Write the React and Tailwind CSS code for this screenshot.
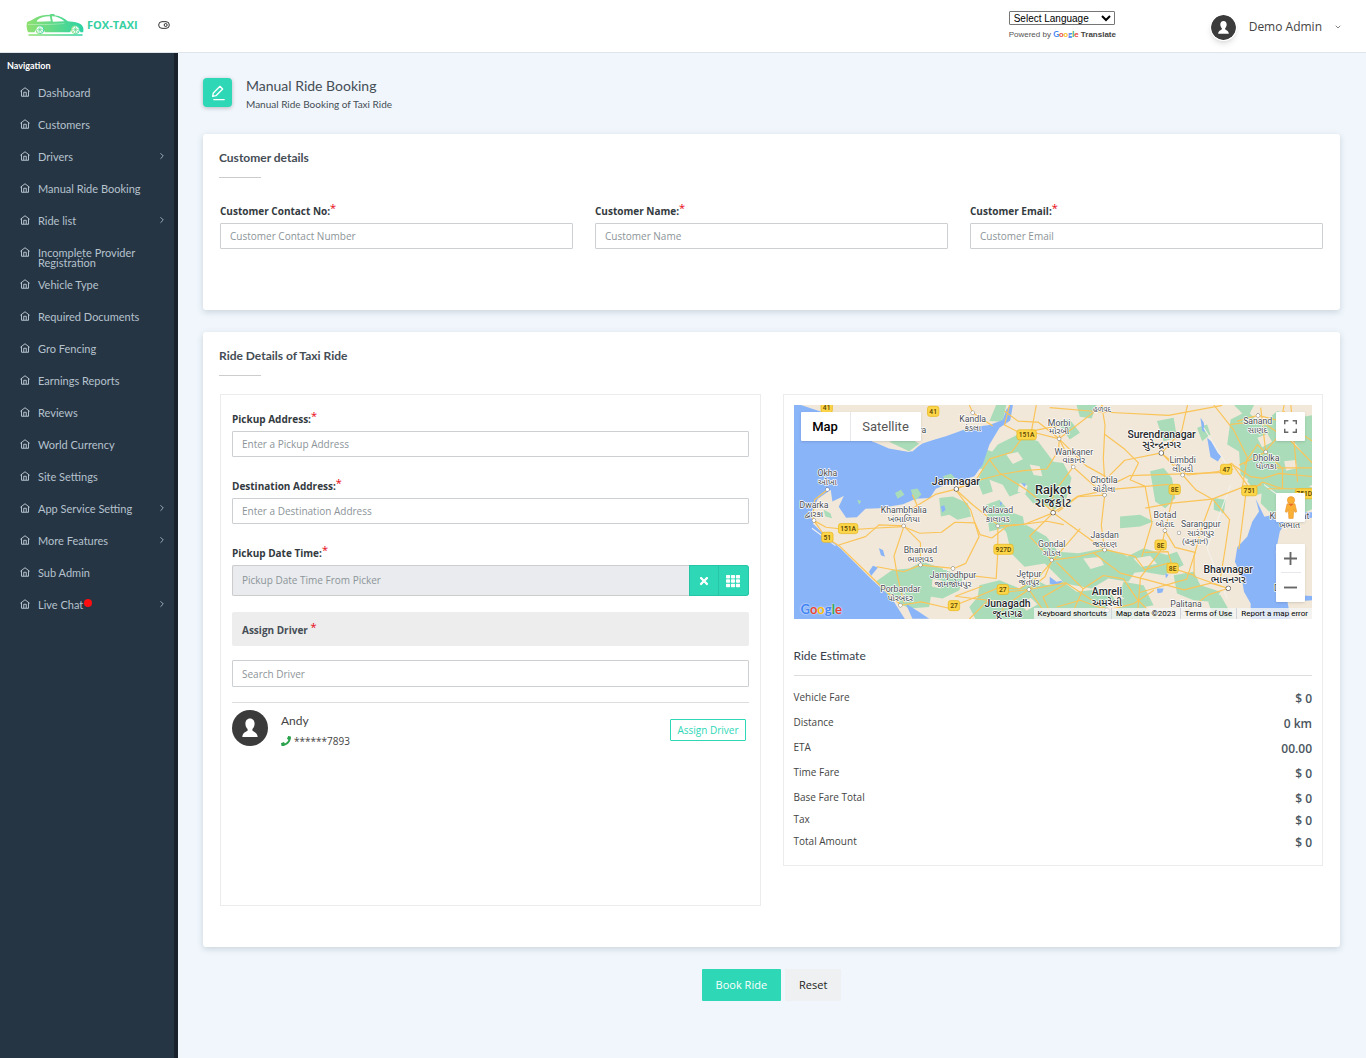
import { FaPhone, FaTimes, FaTh } from 'react-icons/fa';
import { FiChevronDown, FiChevronRight } from 'react-icons/fi';

const navItems = [
  { label: 'Dashboard' },
  { label: 'Customers' },
  { label: 'Drivers', arrow: true },
  { label: 'Manual Ride Booking' },
  { label: 'Ride list', arrow: true },
  { label: 'Incomplete Provider Registration' },
  { label: 'Vehicle Type' },
  { label: 'Required Documents' },
  { label: 'Gro Fencing' },
  { label: 'Earnings Reports' },
  { label: 'Reviews' },
  { label: 'World Currency' },
  { label: 'Site Settings' },
  { label: 'App Service Setting', arrow: true },
  { label: 'More Features', arrow: true },
  { label: 'Sub Admin' },
  { label: 'Live Chat', arrow: true, dot: true },
];

const fareRows = [
  { label: 'Vehicle Fare', value: '$ 0' },
  { label: 'Distance', value: '0 km' },
  { label: 'ETA', value: '00.00' },
  { label: 'Time Fare', value: '$ 0' },
  { label: 'Base Fare Total', value: '$ 0', short: true },
  { label: 'Tax', value: '$ 0', short: true },
  { label: 'Total Amount', value: '$ 0', short: true },
];

// x / y is the centre of the english name, dot is the town marker
const places = [
  { name: 'Kandla', local: 'કંડલા', x: 550, y: 63, dot: [550, 35] },
  { name: 'Okha', local: 'ઓખા', x: 116, y: 225, dot: [116, 264] },
  { name: 'Dwarka', local: 'દ્વારકા', x: 76, y: 319, dot: [76, 357] },
  { name: 'Khambhalia', local: 'ખંભાળિયા', x: 344, y: 334, dot: [344, 373] },
  { name: 'Kalavad', local: 'કાલાવડ', x: 625, y: 336, dot: [625, 373] },
  { name: 'Bhanvad', local: 'ભાણવડ', x: 394, y: 454, dot: [394, 490] },
  { name: 'Jamjodhpur', local: 'જામજોધપુર', x: 491, y: 529, dot: [491, 500] },
  { name: 'Porbandar', local: 'પોરબંદર', x: 334, y: 571, dot: [334, 610] },
  { name: 'Jetpur', local: 'જેતપુર', x: 718, y: 525, dot: [718, 563] },
  { name: 'Gondal', local: 'ગોંડલ', x: 786, y: 437, dot: [786, 475] },
  { name: 'Morbi', local: 'મોરબી', x: 808, y: 74, dot: [808, 113] },
  { name: 'Wankaner', local: 'વાંકાનેર', x: 852, y: 160, dot: [850, 197] },
  { name: 'Chotila', local: 'ચોટીલા', x: 942, y: 245, dot: [944, 281] },
  { name: 'Limbdi', local: 'લીંબડી', x: 1177, y: 185, dot: [1177, 221] },
  { name: 'Botad', local: 'બોટાદ', x: 1124, y: 349, dot: [1124, 387] },
  { name: 'Sarangpur', local: 'સારંગપુર', x: 1231, y: 377, dot: [1166, 394] },
  { name: 'Jasdan', local: 'જસદણ', x: 944, y: 409, dot: [944, 445] },
  { name: 'Palitana', local: '', x: 1187, y: 615, dot: [1180, 634] },
  { name: 'Sanand', local: 'સાણંદ', x: 1401, y: 69, dot: [1402, 43] },
  { name: 'Dholka', local: 'ધોળકા', x: 1426, y: 178, dot: [1425, 152] },
  { name: 'Khambhat', local: 'ખંભાત', x: 1496, y: 353, dot: [1496, 330] },
];

const cities = [
  { name: 'Jamnagar', local: '', x: 500, y: 250, size: 32, dot: [501, 263] },
  { name: 'Rajkot', local: 'રાજકોટ', x: 790, y: 279, size: 38, dot: [790, 334] },
  { name: 'Junagadh', local: 'જૂનાગઢ', x: 654, y: 614, size: 31 },
  { name: 'Surendranagar', local: 'સુરેન્દ્રનગર', x: 1114, y: 110, size: 31, dot: [1113, 155] },
  { name: 'Bhavnagar', local: 'ભાવનગર', x: 1313, y: 514, size: 31, dot: [1313, 559] },
  { name: 'Amreli', local: 'અમરેલી', x: 951, y: 580, size: 31, dot: [951, 625] },
];

const shields = [
  { text: '41', x: 114, y: 20, w: 34 },
  { text: '41', x: 432, y: 31, w: 34 },
  { text: '151A', x: 711, y: 101, w: 58 },
  { text: '151A', x: 178, y: 381, w: 58 },
  { text: '51', x: 116, y: 407, w: 34 },
  { text: '927D', x: 642, y: 443, w: 58 },
  { text: '27', x: 640, y: 563, w: 34 },
  { text: '27', x: 494, y: 611, w: 34 },
  { text: '47', x: 1307, y: 204, w: 34 },
  { text: '751', x: 1376, y: 268, w: 46 },
  { text: '8E', x: 1153, y: 264, w: 34 },
  { text: '8E', x: 1111, y: 430, w: 34 },
  { text: '8E', x: 1147, y: 499, w: 34 },
  { text: '751D', x: 1540, y: 277, w: 54 },
];

const HomeIcon = () => (
  <svg viewBox="0 0 20 20" className="-mt-px h-[10px] w-[10px] shrink-0" fill="none" stroke="currentColor" strokeWidth="2">
    <path d="M1.500 8 10 1.500 18.500 8M3 7v11.500h14V7" strokeLinejoin="round" strokeLinecap="round" />
    <path d="M7.500 18v-7.500h5V18" />
  </svg>
);

const Avatar = ({ className }) => (
  <svg viewBox="0 0 36 36" className={className}>
    <circle cx="18" cy="18" r="18" fill="#3b3b3b" />
    <path
      d="M18 8.500c-3 0-4.600 2.300-4.600 5.200 0 2.200.9 4.100 2.200 5.200v1.700c-.4 1.300-5 1.500-5.300 6.400h15.400c-.3-4.900-4.900-5.100-5.300-6.400v-1.700c1.300-1.100 2.200-3 2.200-5.200 0-2.900-1.600-5.200-4.600-5.200z"
      fill="#fff"
    />
  </svg>
);

const Logo = () => (
  <a href="#" className="flex items-center gap-[2px]">
    <svg viewBox="0 0 174 66" className="h-[22px] w-[59px]">
      <defs>
        <linearGradient id="car" x1="0" x2="1">
          <stop offset="0" stopColor="#8fe070" />
          <stop offset="1" stopColor="#2cd3a4" />
        </linearGradient>
      </defs>
      <path
        fill="url(#car)"
        d="M2 24c6-3 16-6 24-12C38 4 54 2 70 2l2-2h12v4c18 2 30 9 40 18 20 1 36 4 43 13 5 6 4 14 3 20h-8a16 16 0 0 0-31 0H55a16 16 0 0 0-31 0H6C0 50-1 30 2 24z"
      />
      <path fill="#fff" d="M32 19c8-8 22-12 38-12l3 15-42 1zM76 7c16 0 28 6 38 15l-35 1z" />
      <path fill="#fff" fillOpacity="0.35" d="M4 30h60l50-2v2l-50 3H4z" />
      {[40, 147].map((cx) => (
        <g key={cx}>
          <circle cx={cx} cy="47" r="12" fill="#fff" stroke="url(#car)" strokeWidth="3" />
          <path d={`M${cx} 37v20M${cx - 10} 47h20M${cx - 7} 40l14 14M${cx + 7} 40l-14 14`} stroke="#5fd98c" strokeWidth="2" />
        </g>
      ))}
      <path fill="url(#car)" d="M6 61h162v4H6z" />
    </svg>
    <span className="font-['Open_Sans',sans-serif] text-[11px] font-bold text-[#35cfa2]">FOX-TAXI</span>
  </a>
);

const GoogleWord = ({ className }) => (
  <span className={className}>
    <span className="text-[#4285f4]">G</span>
    <span className="text-[#ea4335]">o</span>
    <span className="text-[#fbbc05]">o</span>
    <span className="text-[#4285f4]">g</span>
    <span className="text-[#34a853]">l</span>
    <span className="text-[#ea4335]">e</span>
  </span>
);

const Header = () => (
  <header className="flex h-[53px] items-center border-b border-[#dfe5ea] bg-white pr-6 pb-[2px] pl-[26px]">
    <Logo />
    <button type="button" aria-label="Toggle menu" className="ml-5 text-[#333]">
      <svg viewBox="0 0 36 24" className="h-2 w-3" fill="none" stroke="currentColor" strokeWidth="3">
        <rect x="2" y="2" width="32" height="20" rx="10" />
        <circle cx="23" cy="12" r="4.500" />
      </svg>
    </button>

    {/* Language */}
    <div className="ml-auto w-[108px] font-['Liberation_Sans',sans-serif]">
      <select
        aria-label="Select Language"
        className="block h-[14px] w-[106px] rounded-[1px] border border-[#767676] bg-white text-[10px] leading-3 text-black"
      >
        <option>Select Language</option>
      </select>
      <p className="mt-1 text-[8px] leading-[10px] whitespace-nowrap text-[#555]">
        Powered by <GoogleWord className="font-['Lato',sans-serif] font-bold" />{' '}
        <a href="#" className="font-bold text-[#444]">Translate</a>
      </p>
    </div>

    {/* User */}
    <button type="button" className="mt-1 ml-[93px] flex items-center text-[12px] text-[#444]">
      <Avatar className="mr-3 h-[27px] w-[27px] rounded-full border border-white shadow-md" />
      Demo Admin
      <FiChevronDown size={8} className="ml-3" />
    </button>
  </header>
);

const Sidebar = () => (
  <aside className="w-[178px] shrink-0 border-r-4 border-[#18212c] bg-[#263544] font-['Lato',sans-serif]">
    <h2 className="h-6 pt-[7px] pl-[7px] text-[9px] leading-3 font-bold text-white">Navigation</h2>
    <nav>
      {navItems.map((item) => (
        <a key={item.label} href="#" className="flex h-8 items-start pt-[11px] pr-[7px] pl-5 text-[11px] leading-[10px] text-[#b5c2cd]">
          <HomeIcon />
          <span className="ml-2 max-w-[112px]">{item.label}</span>
          {item.dot && <span className="-mt-px ml-px h-2 w-2 rounded-full bg-[#fb0d10]" />}
          {item.arrow && <FiChevronRight size={10} className="-mt-px ml-auto" />}
        </a>
      ))}
    </nav>
  </aside>
);

const Required = () => <span className="align-[3px] text-[11px] leading-none font-normal text-red-600">*</span>;

const Label = ({ htmlFor, children }) => (
  <label htmlFor={htmlFor} className="block h-4 text-[10px] leading-4 font-bold text-[#333a40]">
    {children}
    <Required />
  </label>
);

const inputClass =
  'block w-full border border-[#ccd0d3] bg-white px-[9px] text-[10px] text-gray-700 placeholder:text-[#8c9499] outline-none';

const Field = ({ id, label, placeholder }) => (
  <div>
    <Label htmlFor={id}>{label}</Label>
    <input id={id} type="text" placeholder={placeholder} className={`${inputClass} mt-[5px] h-[26px] rounded-[1px]`} />
  </div>
);

const Card = ({ title, className, children }) => (
  <section className={`rounded-[3px] bg-white px-[16px] shadow-[0_2px_6px_rgba(69,90,100,0.22)] ${className}`}>
    <h2 className="pt-4 font-['Lato',sans-serif] text-[12px] leading-4 font-bold text-[#454d55]">{title}</h2>
    <div className="mt-[11px] w-[42px] border-t border-[#ccc]" />
    {children}
  </section>
);

const MapDrawing = () => (
  <svg
    viewBox="12 12 1557 639"
    preserveAspectRatio="xMidYMid slice"
    className="block h-full w-full font-['Roboto','Noto_Sans_Gujarati','Noto_Sans',sans-serif]"
    role="img"
    aria-label="Map of Gujarat"
  >
    <rect x="0" y="0" width="1600" height="680" fill="#f1e8d9" />
    {/* vegetation */}
    <g fill="#aadcb9">
      <path d="M590 175l35-45 60-30 60 20 45 60 20 50-30 70-50 5-30-35-40 15-20-35-40-15-40 15z" />
      <path d="M780 180l40 5 25 45-15 60-35 35-40-20-20-60z" />
      <path d="M450 290l40-5 45 20 10 40-40 10-25-15-25 5zM560 230l40 5 10 35-30 10zM590 310l40-15 30 35 40 15 10 60-40 10-30-35-40 10z" />
      <path d="M260 540l50-35 50-5 40-20 60 20 20 40-50 15-10 60-60 5-60-35zM390 500l80 5 50 20-10 40-50 25-60-10z" />
      <path d="M570 550l60-15 60 25 40-30 40 20 50-10 40 30 90-10 30 40 40 5 20 50H560l-20-40 25-30z" />
      <path d="M650 390l60-20 60 35 35 45 60 5 80-15 60 20 40 35-30 45-60-10-50 30-80-15-60-60-60 10-40-40z" />
      <path d="M1000 470l60-30 70 20 30-10 20 40-60 30-60-10-50 5zM1080 210l40-10 25 30 10 60-30 30-30-20zM1100 60l50-10 10 60-40 10zM990 345l60-5 40 20-40 15-60 5zM1220 80l30-10 10 30-25 20z" />
      <path d="M1320 55l50-25 40 40 50-40 60 20 60-10v200l-50 30-60-10-70 20-30-40 20-30-30-50-50-30z" />
      <path d="M1340 70l30 80 50 40-40 50-30-20zM1330 12h60l-20 40zM1415 250l80-10 75 20v60l-70 30-60-15-30-30z" />
      <path d="M1150 520l60-10 20 40 60 20-20 30-60-5-50-20zM890 610l120-20 60 30-20 40H870zM1240 560l50 20 40 70h-60zM800 60l40-5 30 40-30 20zM1270 290l35 5-5 40-30-10z" />
      <path d="M600 60l20-48h30l-10 50zM860 12l60 0-15 40-35-5zM560 200l30-55 30 10-30 50z" />
      <path d="M105 325l20 10 5 15-20-5zM1000 540l60 10 30 60-50 10-50-40z" />
    </g>
    {/* clearings */}
    <g fill="#f1e8d9">
      <path d="M650 160l35-8 15 22-30 14zM720 190l30 5 8 30-26-4zM690 245l24 8-6 24-24-6zM880 470l50-4 12 24-40 12zM690 600l34-12 20 20-34 18zM1400 110l30-12 14 24-30 16zM1480 180l34-4 6 24-34 8zM1030 470l50-8 20 24-46 10zM430 530l30 6-6 24-26-6zM950 600l40 6-8 20-34-4z" />
    </g>
    {/* sea */}
    <g fill="#8ab4f8">
      <path d="M12 12h25l90 30 125 80 48 10 40 16 30 3 30-26 70-20 70-25 60-8 40-15 10-30 12-15h8l-8 46-32 22-30 50-20 60-25 35-45 15-40 10-30 12-18 28-42 2-38 16-72 12-40 2-26 25-32 2-22-33 15-32-34 16-5-35-38 27-22 45 8 30 32 32 50 42 90 90 62 58 42 66H12z" />
      <path d="M1395 292l10 38-20 30-15 45-30 32-7 43 20 45 7 45 20 35v50h120l-10-55 79-5v-12l-95-5-15-68-4-60 12-60 20-32 82-10v-16l-100 2-48 12z" />
      <path d="M1250 110l12 10 20 35 10 10-10 16-22-14zM1230 50l10 14 3 30-8-6zM350 605l40 25 30 20h-50zM240 510l12-18 15 5-20 25zM270 440l12 5 6 20-12-4zM1100 560h20l-4 12-14 2zM780 525l20 15 20-4-15 14-25-4zM1125 515l10 4-8 10z" />
      <path d="M455 315l10-4 4 14-10 8zM695 245l14 2-4 10zM630 300l8 4-4 12z" />
    </g>
    {/* top coast, islands */}
    <path d="M70 12h500l-20 50-90 45-60 20-40 25-60-10-50-22z" fill="#f1e8d9" />
    <path d="M300 122l60-12 30 18-30 22zM318 275l18-10 10 15-20 12zM365 265l20-4 12 18-20 20zM460 225l25-8 15 15-25 10zM205 295l12 4-6 10z" fill="#aadcb9" />
    <g stroke="#f4f1ed" strokeWidth="3" fill="none">
      <path d="M1240 80l80 130M1420 250l60 45 40 60M1310 590l-60-150 70-190M1480 90l50 60M70 380l70 52" />
    </g>
    {/* roads */}
    <g stroke="#fbc458" strokeWidth="3.500" fill="none" strokeLinejoin="round">
      <path d="M116 265l-38 30-6 60 40 22 70 8 70-5 90-5 50 20 65-3 40-30 60 2 15 35 35 10 45-35 120-15 50 10" />
      <path d="M76 357l35 50 40 25 95 92 90 86 60-10 80 18 90-35 60-25 65 3 60-40 120-140" />
      <path d="M150 430l80-25 40-35 75 3-30 90 10 60 20 80M344 373l50 50v67l-50 20-80-15M394 490l100 10 35-15 40-80-25-80-45-60" />
      <path d="M390 325l-20-45M501 263l80-30 60-15 60-10 70-5 35-55 5-60M501 263l-60 15-75 45M501 263l60-30 40-60 65-20 45-60 100-20" />
      <path d="M500 265l50 45 75 60v80l-5 80-90-10M600 175l30 40 80 50 80 65M625 373l80-5 85-34 75-50 100-20 170-15" />
      <path d="M540 12l10 23 60 40M645 30l40 30 60 3 63 50M660 12l-15 60 50 25M740 12l-15 80 83 21 42 84-60 80v60" />
      <path d="M790 334l-70 70 66 71-20 50-48 38-90 10M790 334l70 50 84 60 90 20 30 40 70-20M718 563l-60 40-160-20 80-30M718 563l60 88M718 563l110-20 123 82" />
      <path d="M808 113l130-100M808 113l80 80 90 50 40-20 290-10 20-10M850 197l94 84-10 90 10 74M944 281l-80 5-60 45" />
      <path d="M780 20l155 13 200 10 160-30M935 12l10 60-5 100 4 65 60-60 110-22 60-65 20-90M945 100l60 45 40 40-25 50 45 20 20 110-30 100" />
      <path d="M1113 155l64 66 40 45 50 28 50 60-15 100-15 90M1113 155l80 66 90-10 40-25 50 70 40-5" />
      <path d="M1065 320l80-15 120-12 90-35 15-90-40-80-60-76M1153 264l-29 123-13 60-60 80-10 120M1124 387l30 50 60 15-25 80-140 40" />
      <path d="M1265 294l-30 80-24 90v60l100 35-50-15-80 20-110-30-80-20-80-60M1210 520l-62-20-15-50-70 2" />
      <path d="M1313 559l-60 20-73 55M951 625l80-20 60-40M951 625l-80-30-70 20M830 545l-70 40 30 66M944 445l-80 20-80 10" />
      <path d="M1360 190l40-60 22 22 40-45 18-95M1320 186l60 40 36 5 50-15 103 10M1340 60l62-17 78 20 89 60M1425 152l50 50v60l-60-20-50 40-20 160M1410 20l15 132-80 40M1480 30l20 90 69 70M1440 200h129M1430 262h139M1470 100l-60-40-90 10M1500 12l20 230" />
      <path d="M840 651l40-90 60-40 60 10 40 60 60 60M880 561l-80-80M620 651l34-50M540 651l60-60" />
    </g>
    {/* road shields */}
    {shields.map((s, i) => (
      <g key={i}>
        <rect x={s.x - s.w / 2} y={s.y - 15} width={s.w} height="30" rx="7" fill="#fcd548" stroke="#e7b416" strokeWidth="2" />
        <text x={s.x} y={s.y + 8} textAnchor="middle" fontSize="20" fontWeight="500" fill="#5a4300">
          {s.text}
        </text>
      </g>
    ))}
    {/* town names */}
    <g textAnchor="middle" stroke="#fff" strokeWidth="4" paintOrder="stroke" strokeLinejoin="round" fill="#4a4d52">
      {places.map((p) => (
        <g key={p.name} fontSize="26">
          <circle cx={p.dot[0]} cy={p.dot[1]} r="5" fill="#fff" stroke="#666" strokeWidth="2.500" />
          <text x={p.x} y={p.y}>{p.name}</text>
          <text x={p.x} y={p.y + 26}>{p.local}</text>
        </g>
      ))}
      <text x="1214" y="427" fontSize="24">(હનુમાન)</text>
      <text x="400" y="95" fontSize="26">ra</text>
      <text x="936" y="32" fontSize="22">હળવદ</text>
      <text x="1458" y="566" fontSize="26">D</text>
      {cities.map((c) => (
        <g key={c.name} fill="#26282b" fontWeight="500" fontSize={c.size}>
          {c.dot && <circle cx={c.dot[0]} cy={c.dot[1]} r="6" fill="#fff" stroke="#333" strokeWidth="3" />}
          <text x={c.x} y={c.y}>{c.name}</text>
          <text x={c.x} y={c.y + c.size}>{c.local}</text>
        </g>
      ))}
    </g>
  </svg>
);

const RideMap = () => (
  <div className="relative h-[214px] overflow-hidden font-['Roboto',sans-serif]">
    <MapDrawing />
    <div className="absolute top-[7px] left-[7px] flex h-[29px] divide-x divide-gray-200 rounded-[1px] bg-white text-[13px] shadow-sm">
      <button type="button" className="w-[50px] font-medium text-black">Map</button>
      <button type="button" className="w-[70px] text-[#565656]">Satellite</button>
    </div>
    <button type="button" aria-label="Fullscreen" className="absolute top-[7px] right-[7px] flex h-[29px] w-[29px] items-center justify-center rounded-[1px] bg-white shadow-sm">
      <svg viewBox="0 0 18 18" className="h-[13px] w-[13px]" fill="#666">
        <path d="M0 0v6h2V2h4V0zM12 0v2h4v4h2V0zM16 12v4h-4v2h6v-6zM0 12v6h6v-2H2v-4z" />
      </svg>
    </button>
    <button type="button" aria-label="Street view" className="absolute right-[7px] bottom-[97px] flex h-[29px] w-[29px] items-center justify-center rounded-[1px] bg-white shadow-sm">
      <svg viewBox="0 0 23 38" className="h-[23px] w-[14px]">
        <path d="M5 13h13l3 13-3 1-2-5-1 15H8L7 22l-2 5-3-1z" fill="#fbb034" stroke="#e8912d" />
        <path d="M7 13l4.500 4L16 13z" fill="#e8652d" />
        <circle cx="11.500" cy="7" r="6" fill="#fbb034" stroke="#e8912d" />
      </svg>
    </button>
    <div className="absolute right-[7px] bottom-[17px] flex w-[29px] flex-col items-center divide-y divide-gray-200 rounded-[1px] bg-white shadow-sm">
      <button type="button" aria-label="Zoom in" className="flex h-[29px] w-5 items-center justify-center">
        <svg viewBox="0 0 14 14" className="h-[13px] w-[13px]" fill="#666"><path d="M6 0h2v6h6v2H8v6H6V8H0V6h6z" /></svg>
      </button>
      <button type="button" aria-label="Zoom out" className="flex h-[29px] w-5 items-center justify-center">
        <svg viewBox="0 0 14 14" className="h-[13px] w-[13px]" fill="#666"><path d="M0 6h14v2H0z" /></svg>
      </button>
    </div>
    <GoogleWord className="absolute bottom-px left-[7px] font-['Lato',sans-serif] text-[13px] leading-[18px] font-bold text-shadow-[0_0_2px_white]" />
    <div className="absolute right-0 bottom-0 flex h-[11px] items-center divide-x divide-gray-300 bg-[#f5f5f5]/80 text-[8px] leading-[11px] text-black">
      <button type="button" className="px-1">Keyboard shortcuts</button>
      <span className="px-1">Map data ©2023</span>
      <a href="#" className="px-1">Terms of Use</a>
      <a href="#" className="px-1">Report a map error</a>
    </div>
  </div>
);

const RideForm = () => (
  <div className="min-h-[512px] border border-[#ececec] px-[11px] pt-[15px]">
    <div className="flex flex-col gap-5">
      <Field id="pickup" label="Pickup Address:" placeholder="Enter a Pickup Address" />
      <Field id="destination" label="Destination Address:" placeholder="Enter a Destination Address" />
      <div>
        <Label htmlFor="time">Pickup Date Time:</Label>
        <div className="mt-[5px] flex h-[31px]">
          <input
            id="time"
            type="text"
            readOnly
            placeholder="Pickup Date Time From Picker"
            className="min-w-0 flex-1 rounded-l-[2px] border border-r-0 border-[#ccc] bg-[#e9ebee] px-[9px] text-[10px] outline-none placeholder:text-[#8c9499]"
          />
          <button type="button" aria-label="Clear date" className="flex w-[30px] items-center justify-center border border-[#25c5a5] bg-[#2ed8b6] text-white">
            <FaTimes size={12} />
          </button>
          <button type="button" aria-label="Pick date" className="flex w-[30px] items-center justify-center rounded-r-[3px] border border-l-0 border-[#25c5a5] bg-[#2ed8b6] text-white">
            <FaTh size={14} />
          </button>
        </div>
      </div>
    </div>

    <div className="mt-4 flex h-[34px] items-center rounded-[2px] bg-[#ededed] px-[10px]">
      <label htmlFor="driver" className="h-4 text-[10px] leading-4 font-bold text-[#454d55]">
        Assign Driver <Required />
      </label>
    </div>
    <input id="driver" type="text" placeholder="Search Driver" className={`${inputClass} mt-[14px] h-[27px] rounded-[1px]`} />

    {/* Driver */}
    <div className="mt-[15px] flex border-t border-[#ddd] pt-[7px]">
      <Avatar className="h-9 w-9" />
      <div className="ml-[13px] pt-[3px] text-[#444]">
        <p className="font-['Lato',sans-serif] text-[12px] leading-4">Andy</p>
        <p className="mt-1 flex items-center gap-[3px] text-[10px] leading-4">
          <FaPhone size={10} className="text-[#2ba24c]" />
          ******7893
        </p>
      </div>
      <button type="button" className="mt-[9px] mr-[3px] ml-auto h-[22px] rounded-[1px] border border-[#2ed8b6] px-[6px] text-[10px] text-[#2ed8b6]">
        Assign Driver
      </button>
    </div>
  </div>
);

const RideEstimate = () => (
  <div className="border border-[#ececec] px-[10px] pt-[10px] pb-[10px]">
    <RideMap />
    <h3 className="mt-[29px] border-b border-[#ddd] pb-[11px] font-['Lato',sans-serif] text-[12px] leading-4 text-[#37404a]">
      Ride Estimate
    </h3>
    <table className="mt-[13px] w-full">
      <tbody>
        {fareRows.map((row) => (
          <tr key={row.label} className={row.short ? 'h-[22px]' : 'h-[25px]'}>
            <th scope="row" className="p-0 text-left align-top text-[10px] leading-4 font-normal text-[#444]">{row.label}</th>
            <td className="p-0 pt-[2px] text-right align-top text-[12px] leading-4 font-semibold text-[#4a5560]">{row.value}</td>
          </tr>
        ))}
      </tbody>
    </table>
  </div>
);

const App = () => (
  <div className="flex min-h-screen flex-col bg-[#f0f6fc] font-['Open_Sans',sans-serif]">
    <Header />
    <div className="flex flex-1">
      <Sidebar />
      <main className="min-w-0 flex-1 pt-[25px] pr-[26px] pb-10 pl-[25px]">
        {/* Page title */}
        <div className="flex">
          <span className="flex h-[29px] w-[29px] items-center justify-center rounded-[4px] bg-[#2ed8b6] text-white shadow-[0_1px_4px_rgba(0,0,0,0.25)]">
            <svg viewBox="0 0 24 24" className="h-4 w-4" fill="none" stroke="currentColor" strokeWidth="2">
              <path d="M4 17l1-5L15 2l4 4L9 16zM5 22h17" strokeLinejoin="round" />
            </svg>
          </span>
          <div className="ml-[14px] font-['Lato',sans-serif] text-[#454d55]">
            <h1 className="text-[14px] leading-4">Manual Ride Booking</h1>
            <p className="mt-[2px] text-[10px] leading-4">Manual Ride Booking of Taxi Ride</p>
          </div>
        </div>

        <Card title="Customer details" className="mt-[22px] pb-[61px]">
          <div className="mx-px mt-6 grid grid-cols-3 gap-[22px]">
            <Field id="contact" label="Customer Contact No:" placeholder="Customer Contact Number" />
            <Field id="name" label="Customer Name:" placeholder="Customer Name" />
            <Field id="email" label="Customer Email:" placeholder="Customer Email" />
          </div>
        </Card>

        <Card title="Ride Details of Taxi Ride" className="mt-[22px] pb-[41px]">
          <div className="mx-px mt-[18px] grid grid-cols-2 items-start gap-[22px]">
            <RideForm />
            <RideEstimate />
          </div>
        </Card>

        <div className="mt-[22px] flex justify-center gap-1">
          <button type="button" className="h-8 rounded-[1px] bg-[#2ed8b6] px-[14px] text-[11px] text-white">Book Ride</button>
          <button type="button" className="h-8 rounded-[1px] bg-[#eff0f1] px-[14px] text-[11px] text-[#222]">Reset</button>
        </div>
      </main>
    </div>
  </div>
);

export default App;
